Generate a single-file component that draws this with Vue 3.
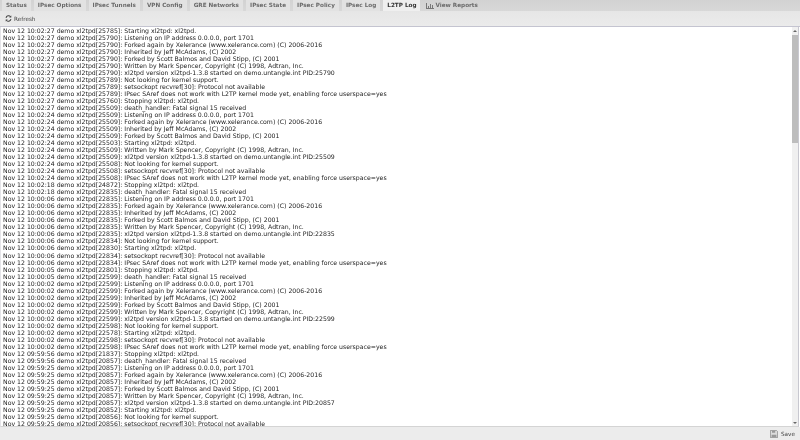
<script setup>
const tabs = ['Status', 'IPsec Options', 'IPsec Tunnels', 'VPN Config', 'GRE Networks', 'IPsec State', 'IPsec Policy', 'IPsec Log', 'L2TP Log']

const startup = (time, pid, tail) => [
  [time, pid, 'Listening on IP address 0.0.0.0, port 1701'],
  [time, pid, 'Forked again by Xelerance (www.xelerance.com) (C) 2006-2016'],
  [time, pid, 'Inherited by Jeff McAdams, (C) 2002'],
  [time, pid, 'Forked by Scott Balmos and David Stipp, (C) 2001'],
  ...tail,
]
const written = (time, pid) => [time, pid, 'Written by Mark Spencer, Copyright (C) 1998, Adtran, Inc.']
const version = (time, pid) => [time, pid, `xl2tpd version xl2tpd-1.3.8 started on demo.untangle.int PID:${pid}`]
const starting = (time, pid) => [time, pid, 'Starting xl2tpd: xl2tpd.']
const looking = (time, pid) => [time, pid, 'Not looking for kernel support.']
const sockopt = (time, pid) => [time, pid, 'setsockopt recvref[30]: Protocol not available']
const saref = (time, pid) => [time, pid, 'IPsec SAref does not work with L2TP kernel mode yet, enabling force userspace=yes']
const stopping = (time, pid) => [time, pid, 'Stopping xl2tpd: xl2tpd.']
const death = (time, pid) => [time, pid, 'death_handler: Fatal signal 15 received']

const lines = [
  starting('10:02:27', 25785),
  ...startup('10:02:27', 25790, [written('10:02:27', 25790), version('10:02:27', 25790)]),
  looking('10:02:27', 25789),
  sockopt('10:02:27', 25789),
  saref('10:02:27', 25789),
  stopping('10:02:27', 25760),
  death('10:02:27', 25509),
  ...startup('10:02:24', 25509, [starting('10:02:24', 25503), written('10:02:24', 25509), version('10:02:24', 25509)]),
  looking('10:02:24', 25508),
  sockopt('10:02:24', 25508),
  saref('10:02:24', 25508),
  stopping('10:02:18', 24872),
  death('10:02:18', 22835),
  ...startup('10:00:06', 22835, [written('10:00:06', 22835), version('10:00:06', 22835)]),
  looking('10:00:06', 22834),
  starting('10:00:06', 22830),
  sockopt('10:00:06', 22834),
  saref('10:00:06', 22834),
  stopping('10:00:05', 22801),
  death('10:00:05', 22599),
  ...startup('10:00:02', 22599, [written('10:00:02', 22599), version('10:00:02', 22599)]),
  looking('10:00:02', 22598),
  starting('10:00:02', 22578),
  sockopt('10:00:02', 22598),
  saref('10:00:02', 22598),
  stopping('09:59:56', 21837),
  death('09:59:56', 20857),
  ...startup('09:59:25', 20857, [written('09:59:25', 20857), version('09:59:25', 20857)]),
  starting('09:59:25', 20852),
  looking('09:59:25', 20856),
  sockopt('09:59:25', 20856),
].map(([t, p, m]) => `Nov 12 ${t} demo xl2tpd[${p}]: ${m}`)
</script>

<template>
  <div class="app">
    <nav class="tabs">
      <div v-for="t in tabs" :key="t" class="tab" :class="{ active: t === 'L2TP Log' }">{{ t }}</div>
      <div class="tab plain">
        <svg class="chart" viewBox="0 0 8 6" width="8" height="6">
          <path d="M0 0h1v5h7v1H0z" fill="#777" />
          <path d="M2 3h1v2H2zM4 1h1v4H4zM6 2h1v3H6z" fill="#777" />
        </svg>
        View Reports
      </div>
    </nav>
    <div class="toolbar">
      <button class="btn">
        <svg viewBox="0 0 10 10" width="7" height="7">
          <path d="M1.500 4A3.600 3.600 0 0 1 8 2.600M8.500 6A3.600 3.600 0 0 1 2 7.400" fill="none" stroke="#444" stroke-width="1.500" />
          <path d="M9 .6v3H6zM1 9.400v-3h3z" fill="#444" />
        </svg>
        Refresh
      </button>
    </div>
    <div class="body">
      <div class="log">
        <div v-for="(l, i) in lines" :key="i" class="line">{{ l }}</div>
      </div>
      <div class="scroll">
        <span class="arrow up"></span>
        <span class="thumb"></span>
        <span class="arrow down"></span>
      </div>
    </div>
    <div class="footer">
      <button class="btn save">
        <svg viewBox="0 0 10 10" width="8" height="8">
          <path d="M.5.5h7.500l1.500 1.500v7.500H.5z" fill="#ddd" stroke="#777" stroke-width=".8" />
          <path d="M2.500 1h4v2.500h-4zM2 6h6v3.200H2z" fill="#999" />
        </svg>
        Save
      </button>
    </div>
  </div>
</template>

<style>
html, body { margin: 0; background: #fff; }
</style>

<style scoped>
.app {
  width: 800px;
  height: 440px;
  display: flex;
  flex-direction: column;
  overflow: hidden;
  font-family: "DejaVu Sans", sans-serif;
  color: #333;
}
.tabs {
  height: 11px;
  flex: none;
  display: flex;
  gap: 3px;
  background: linear-gradient(#d2d2d2, #d8d8d8);
  padding-left: 2px;
  will-change: transform;
}
.tab {
  padding: 0 4px;
  background: #e2e2e2;
  color: #6a6a6a;
  font-size: 5.700px;
  font-weight: 700;
  line-height: 11px;
  white-space: nowrap;
}
.tab.active { background: #efefef; color: #333; margin-right: -3px; }
.tab.plain { background: none; display: flex; align-items: center; gap: 1px; padding: 0 0 0 6px; }
.chart { flex: none; }
.toolbar {
  height: 15px;
  flex: none;
  display: flex;
  align-items: center;
  padding-left: 5px;
  background: linear-gradient(#e6e6e6, #ebebeb);
  border-bottom: 1px solid #c4c4d0;
}
.btn {
  display: flex;
  align-items: center;
  gap: 2px;
  padding: 0;
  border: 0;
  background: none;
  font: 400 5.700px "DejaVu Sans", sans-serif;
  color: #444;
  will-change: transform;
}
.save { gap: 3px; }
.body {
  flex: 1;
  min-height: 0;
  display: flex;
  background: #fff;
  border-left: 1px solid #e4e4e8;
  border-right: 1px solid #c8c8d0;
  border-bottom: 1px solid #d4d4d4;
  margin-right: 1px;
}
.log {
  flex: 1;
  min-width: 0;
  overflow: hidden;
  padding: 0 0 0 2px;
  font-size: 6.200px;
  line-height: 7.020px;
  color: #222;
  will-change: transform;
}
.line { white-space: nowrap; height: 7.020px; }
.scroll {
  width: 6px;
  flex: none;
  display: flex;
  flex-direction: column;
  align-items: center;
  padding: 3px 0 2px;
  background: #f0f0f0;
}
.thumb { width: 6px; height: 108px; background: #bdbdbd; margin: 3px 0 auto; }
.arrow { width: 0; height: 0; border-left: 2px solid transparent; border-right: 2px solid transparent; }
.arrow.up { border-bottom: 2px solid #666; }
.arrow.down { border-top: 2px solid #666; }
.footer {
  height: 13px;
  flex: none;
  display: flex;
  align-items: center;
  justify-content: flex-end;
  padding-right: 5px;
  background: #ececec;
}
</style>
